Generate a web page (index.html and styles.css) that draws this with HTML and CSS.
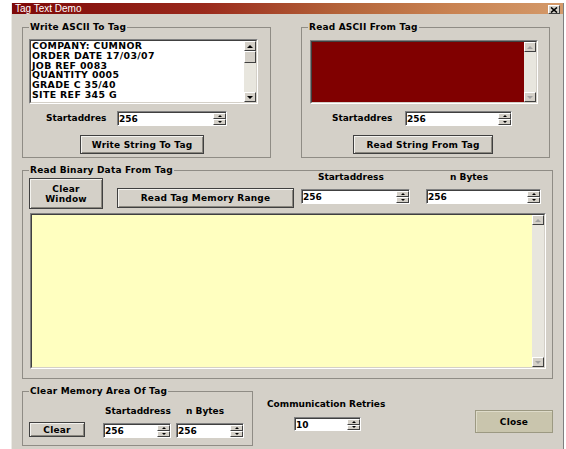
FILE: index.html
```html
<!DOCTYPE html>
<html lang="en">
<head>
<meta charset="utf-8">
<title>Tag Text Demo</title>
<link rel="stylesheet" href="styles.css">
</head>
<body>
<div class="window">
  <div class="titlebar">
    <span class="title">Tag Text Demo</span>
    <span class="title-close">
      <svg width="8" height="6" viewBox="0 0 8 6"><path d="M1 0.5 L7 5.5 M7 0.5 L1 5.5" stroke="#000" stroke-width="1.6"/></svg>
    </span>
  </div>

  <div class="body">
    <div class="row-top">
      <fieldset class="group g-write">
        <legend>Write ASCII To Tag</legend>
        <div class="memo memo-write">
          <div class="memo-inner">
            <div class="memo-text">COMPANY: CUMNOR<br>ORDER DATE 17/03/07<br>JOB REF 0083<br>QUANTITY 0005<br>GRADE C 35/40<br>SITE REF 345 G</div>
            <div class="vscroll">
              <i class="sb-btn up"></i><i class="sb-thumb"></i><i class="sb-track"></i><i class="sb-btn dn"></i>
            </div>
          </div>
        </div>
        <div class="addr-row">
          <span class="lbl lbl-w">Startaddres</span>
          <div class="spin spin-w"><span class="spin-val">256</span><span class="spin-btns"><i class="up"></i><i class="dn"></i></span></div>
        </div>
        <button class="btn btn-write">Write String To Tag</button>
      </fieldset>

      <fieldset class="group g-read">
        <legend>Read ASCII From Tag</legend>
        <div class="memo memo-read">
          <div class="memo-inner">
            <div class="memo-text red"></div>
            <div class="vscroll off">
              <i class="sb-btn up"></i><i class="sb-track"></i><i class="sb-btn dn"></i>
            </div>
          </div>
        </div>
        <div class="addr-row">
          <span class="lbl lbl-r">Startaddres</span>
          <div class="spin spin-r"><span class="spin-val">256</span><span class="spin-btns"><i class="up"></i><i class="dn"></i></span></div>
        </div>
        <button class="btn btn-read">Read String From Tag</button>
      </fieldset>
    </div>

    <fieldset class="group g-binary">
      <legend>Read Binary Data From Tag</legend>
      <div class="bin-toolbar">
        <button class="btn btn-clearwin">Clear<br>Window</button>
        <button class="btn btn-range">Read Tag Memory Range</button>
        <div class="field field-start">
          <span class="lbl">Startaddress</span>
          <div class="spin"><span class="spin-val">256</span><span class="spin-btns"><i class="up"></i><i class="dn"></i></span></div>
        </div>
        <div class="field field-bytes">
          <span class="lbl">n Bytes</span>
          <div class="spin"><span class="spin-val">256</span><span class="spin-btns"><i class="up"></i><i class="dn"></i></span></div>
        </div>
      </div>
      <div class="memo memo-bin">
        <div class="memo-inner">
          <div class="memo-text yellow"></div>
          <div class="vscroll off">
            <i class="sb-btn up"></i><i class="sb-track"></i><i class="sb-btn dn"></i>
          </div>
        </div>
      </div>
    </fieldset>

    <div class="row-bottom">
      <fieldset class="group g-clear">
        <legend>Clear Memory Area Of Tag</legend>
        <div class="clear-labels">
          <span class="lbl lbl-cs">Startaddress</span>
          <span class="lbl">n Bytes</span>
        </div>
        <div class="clear-controls">
          <button class="btn btn-clear">Clear</button>
          <div class="spin spin-c1"><span class="spin-val">256</span><span class="spin-btns"><i class="up"></i><i class="dn"></i></span></div>
          <div class="spin spin-c2"><span class="spin-val">256</span><span class="spin-btns"><i class="up"></i><i class="dn"></i></span></div>
        </div>
      </fieldset>

      <div class="retries">
        <span class="lbl">Communication Retries</span>
        <div class="spin spin-retry"><span class="spin-val">10</span><span class="spin-btns"><i class="up"></i><i class="dn"></i></span></div>
      </div>

      <button class="btn btn-close">Close</button>
    </div>
  </div>
</div>
</body>
</html>
```

FILE: styles.css
```css
* {
  box-sizing: border-box;
}

body {
  margin: 0;
  background: #ffffff;
  font-family: "DejaVu Sans", sans-serif;
  color: #000;
}

/* dialog frame */
.window {
  margin: 3px 0 0 11px;
  width: 553px;
  height: 446px;
  background: #d4d0c8;
  border-left: 1px solid #ecebe6;
  border-right: 1px solid #808080;
  display: flex;
  flex-direction: column;
}

.titlebar {
  height: 11px;
  flex: none;
  background: linear-gradient(to right, #7e0808 0%, #9a2a1c 35%, #b4643a 60%, #c98352 80%, #d49a6a 100%);
  display: flex;
  justify-content: space-between;
  padding: 0 3px 0 3px;
}

.title {
  font: 10px/11px "Liberation Sans", Arial, sans-serif;
  color: #ffffff;
}

.title-close {
  margin-top: 2px;
  width: 12px;
  height: 9px;
  background: #d4d0c8;
  border: 1px solid;
  border-color: #ffffff #404040 #404040 #ffffff;
  display: flex;
  align-items: center;
  justify-content: center;
}

.title-close svg {
  display: block;
}

.body {
  padding-left: 10px;
  display: flex;
  flex-direction: column;
}

/* group boxes */
.group {
  margin: 0;
  padding: 0;
  min-width: 0;
  border: 1px solid #8f8c85;
}

.group legend {
  margin-left: 6px;
  padding: 0 1px;
  height: 11px;
  font: bold 9px/11px "DejaVu Sans", sans-serif;
  letter-spacing: 0.2px;
}

.lbl {
  font: bold 9px/11px "DejaVu Sans", sans-serif;
  white-space: nowrap;
}

/* top row: write / read ascii */
.row-top {
  margin-top: 8px;
  display: flex;
  gap: 30px;
}

.g-write,
.g-read {
  width: 249px;
  padding-bottom: 3px;
}

.memo {
  border: 1px solid;
  border-color: #808080 #ffffff #ffffff #808080;
}

.memo-inner {
  height: 100%;
  display: flex;
  border: 1px solid;
  border-color: #404040 #d4d0c8 #d4d0c8 #404040;
}

.memo-text {
  flex: 1;
  background: #ffffff;
  padding: 0 0 0 1px;
  font: bold 9.4px/9.75px "DejaVu Sans", sans-serif;
  letter-spacing: 0.35px;
  white-space: nowrap;
  overflow: hidden;
}

.memo-text.red {
  background: #800000;
}

.memo-text.yellow {
  background: #ffffc0;
}

.memo-write {
  margin: 6px 0 0 6px;
  width: 229px;
  height: 65px;
}

.memo-read {
  margin: 7px 0 0 8px;
  width: 228px;
  height: 64px;
}

/* vertical scroll bars */
.vscroll {
  width: 12px;
  flex: none;
  display: flex;
  flex-direction: column;
  background: #e8e6de;
}

.sb-btn,
.sb-thumb {
  flex: none;
  background: #d4d0c8;
  border: 1px solid;
  border-color: #ffffff #404040 #404040 #ffffff;
  display: flex;
  align-items: center;
  justify-content: center;
}

.sb-btn {
  height: 10px;
}

.sb-thumb {
  height: 12px;
}

.sb-track {
  flex: 1;
}

.sb-btn::before {
  content: "";
  border-left: 3px solid transparent;
  border-right: 3px solid transparent;
}

.sb-btn.up::before {
  border-bottom: 3px solid #000;
}

.sb-btn.dn::before {
  border-top: 3px solid #000;
}

.vscroll.off .sb-btn.up::before {
  border-bottom-color: #a0a0a0;
}

.vscroll.off .sb-btn.dn::before {
  border-top-color: #a0a0a0;
}

/* spin edits */
.spin {
  height: 15px;
  display: flex;
  background: #ffffff;
  border: 1px solid;
  border-color: #808080 #ffffff #ffffff #808080;
  box-shadow: inset 1px 1px 0 #404040;
}

.spin-val {
  flex: 1;
  padding: 1px 0 0 1px;
  font: bold 9px/12px "DejaVu Sans", sans-serif;
}

.spin-btns {
  width: 13px;
  flex: none;
  display: flex;
  flex-direction: column;
  padding: 1px 0 0 0;
}

.spin-btns i {
  flex: 1;
  background: #d4d0c8;
  border: 1px solid;
  border-color: #ffffff #404040 #404040 #ffffff;
  display: flex;
  align-items: center;
  justify-content: center;
}

.spin-btns i::before {
  content: "";
  border-left: 2px solid transparent;
  border-right: 2px solid transparent;
}

.spin-btns .up::before {
  border-bottom: 2px solid #000;
}

.spin-btns .dn::before {
  border-top: 2px solid #000;
}

.addr-row {
  margin-top: 7px;
  display: flex;
  align-items: center;
}

.lbl-w {
  margin-left: 23px;
  width: 71px;
}

.spin-w {
  width: 110px;
}

.lbl-r {
  margin-left: 30px;
  width: 73px;
}

.spin-r {
  width: 107px;
}

/* push buttons */
.btn {
  display: block;
  padding: 0;
  background: #d4d0c8;
  border: 1px solid #404040;
  box-shadow: inset 1px 1px 0 #f4f3ef, inset -1px -1px 0 #8a877f;
  font: bold 9px/10px "DejaVu Sans", sans-serif;
  letter-spacing: 0.2px;
  color: #000;
  text-align: center;
}

.btn-write {
  margin: 9px 0 0 57px;
  width: 124px;
  height: 19px;
}

.btn-read {
  margin: 9px 0 0 51px;
  width: 140px;
  height: 19px;
}

/* binary data group */
.g-binary {
  margin-top: 7px;
  width: 531px;
  padding-bottom: 9px;
}

.bin-toolbar {
  display: flex;
  align-items: flex-start;
}

.btn-clearwin {
  margin: 2px 0 0 6px;
  width: 74px;
  height: 31px;
}

.btn-range {
  margin: 12px 0 0 14px;
  width: 177px;
  height: 20px;
}

.field {
  margin-top: -4px;
  display: flex;
  flex-direction: column;
}

.field .spin {
  margin-top: 6px;
}

.field-start {
  margin-left: 7px;
  width: 109px;
}

.field-start .lbl {
  padding-left: 17px;
}

.field-bytes {
  margin-left: 16px;
  width: 115px;
}

.field-bytes .lbl {
  padding-left: 24px;
}

.memo-bin {
  margin: 4px 0 0 7px;
  width: 516px;
  height: 156px;
}

/* bottom row */
.row-bottom {
  margin-top: 7px;
  display: flex;
  align-items: flex-start;
}

.g-clear {
  width: 231px;
  padding-bottom: 7px;
}

.clear-labels {
  margin-top: 9px;
  display: flex;
}

.lbl-cs {
  margin-left: 82px;
  width: 81px;
}

.clear-controls {
  margin-top: 5px;
  display: flex;
  align-items: flex-start;
}

.btn-clear {
  margin-left: 6px;
  width: 56px;
  height: 15px;
}

.spin-c1 {
  margin: 1px 0 0 18px;
  width: 68px;
}

.spin-c2 {
  margin: 1px 0 0 5px;
  width: 68px;
}

.retries {
  margin: 13px 0 0 14px;
  display: flex;
  flex-direction: column;
}

.spin-retry {
  margin: 7px 0 0 27px;
  width: 67px;
  height: 14px;
}

.btn-close {
  margin: 24px 10px 0 auto;
  width: 78px;
  height: 23px;
  background: #c9c5ad;
  border: 1px solid #9c9982;
  box-shadow: inset 1px 1px 0 #dedbc9;
}
```
